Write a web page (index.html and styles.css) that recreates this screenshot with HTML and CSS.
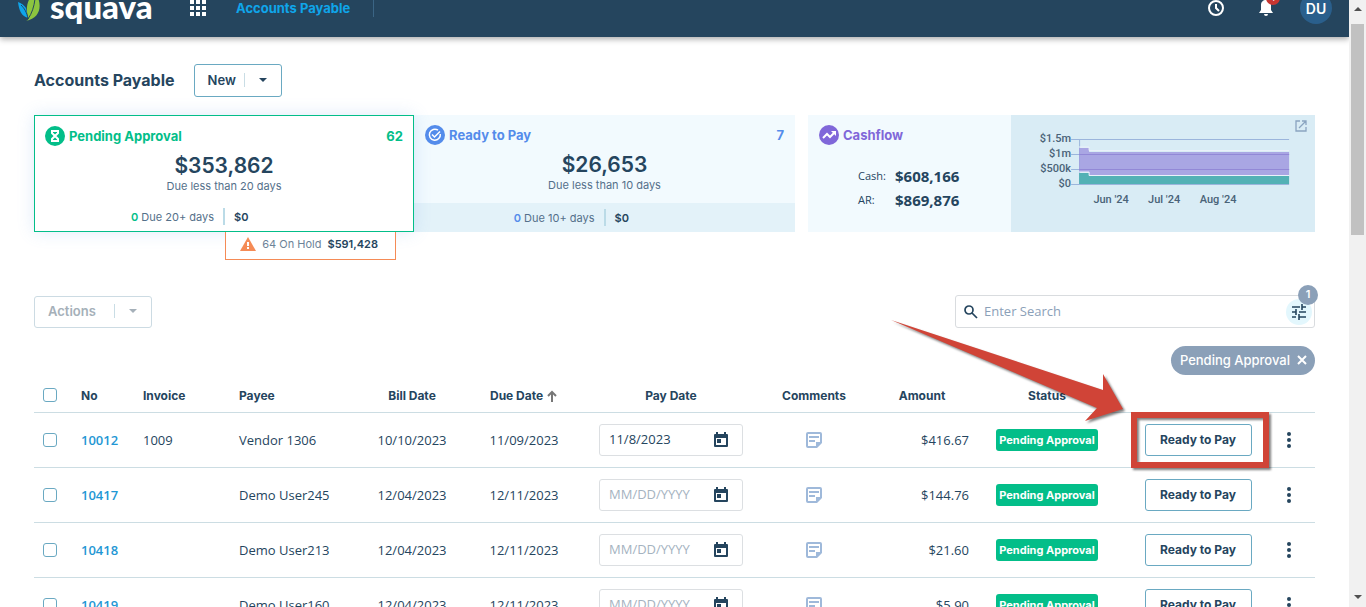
FILE: index.html
```html
<!DOCTYPE html>
<html lang="en">
<head>
    <meta charset="UTF-8">
    <meta name="viewport" content="width=device-width, initial-scale=1.0">
    <title>Accounts Payable</title>
    <link rel="stylesheet" href="styles.css">
</head>
<body>
    <!-- Icons -->
    <svg class="sprite" aria-hidden="true">
        <symbol id="calendar" viewBox="0 0 16 16"><path d="M3 0h2v2h6V0h2v2h1a1 1 0 0 1 1 1v11a1 1 0 0 1-1 1H2a1 1 0 0 1-1-1V3a1 1 0 0 1 1-1h1zM3 6v7h10V6zM4 7h4v4H4z"/></symbol>
        <symbol id="note" viewBox="0 0 18 18"><path fill-rule="evenodd" d="M3 1h12a2 2 0 0 1 2 2v9l-5 5H3a2 2 0 0 1-2-2V3a2 2 0 0 1 2-2zM3 3v12h8v-4h4V3zM4 5h10v2H4zM4 9h6v2H4z"/></symbol>
        <symbol id="dots" viewBox="0 0 24 24"><circle cx="12" cy="6" r="2"/><circle cx="12" cy="12" r="2"/><circle cx="12" cy="18" r="2"/></symbol>
        <symbol id="caret" viewBox="0 0 10 6"><path d="M1 1h8L5 5z"/></symbol>
    </svg>

    <div class="window">
        <div class="page">
            <header class="topbar">
                <a href="#" class="logo">
                    <svg width="24" height="34" viewBox="0 0 24 34" aria-hidden="true">
                        <path fill="#0fa5ea" d="M0 13c3 1 6 3 8 6l2 10C3 27 1 21 0 13z"/>
                        <path fill="#8cc53f" d="M17 3c8 12 6 26-9 29 2-1 3-2 2-4C7 18 10 9 17 3z"/>
                        <path fill="none" stroke="#25455e" d="M10 30c4-6 6-12 7-20M3 16c3 3 6 7 7 14"/>
                    </svg>
                    <span>squava</span>
                </a>
                <button class="icon-btn apps" aria-label="Apps">
                    <svg width="16" height="16" viewBox="0 0 16 16" fill="#fff"><path d="M0 0h4v4H0zM6 0h4v4H6zM12 0h4v4h-4zM0 6h4v4H0zM6 6h4v4H6zM12 6h4v4h-4zM0 12h4v4H0zM6 12h4v4H6zM12 12h4v4h-4z"/></svg>
                </button>
                <a href="#" class="nav-link">Accounts Payable</a>
                <div class="topbar-right">
                    <button class="icon-btn" aria-label="History">
                        <svg width="18" height="18" viewBox="0 0 18 18" fill="none" stroke="#fff" stroke-width="2"><circle cx="9" cy="9" r="7"/><path d="M9 5v4l3 3"/></svg>
                    </button>
                    <button class="icon-btn bell" aria-label="Notifications">
                        <svg width="14" height="18" viewBox="0 0 14 18" fill="#fff"><path d="M7 1c-3 0-5 2-5 5v5l-2 3h14l-2-3V6c0-3-2-5-5-5zM5 15h4a2 2 0 0 1-4 0z"/></svg>
                        <span class="bell-count">1</span>
                    </button>
                    <button class="avatar">DU</button>
                </div>
            </header>

            <main>
                <div class="title-row">
                    <h1>Accounts Payable</h1>
                    <button class="split-btn">New <span class="split-line"></span><svg width="10" height="6"><use href="#caret"/></svg></button>
                </div>

                <section class="cards">
                    <div class="pending-col">
                        <div class="card pending">
                            <div class="card-head">
                                <svg width="20" height="20" viewBox="0 0 20 20"><circle cx="10" cy="10" r="10" fill="#03be89"/><path fill="none" stroke="#fff" stroke-width="2" d="M6 5h8M6 15h8M7 5v2l3 3 3-3V5M7 15v-2l3-3 3 3v2"/></svg>
                                <h2>Pending Approval</h2>
                                <span class="count">62</span>
                            </div>
                            <div class="total">$353,862</div>
                            <div class="due">Due less than 20 days</div>
                            <div class="card-foot">
                                <span><b>0</b> Due 20+ days</span><i></i><strong>$0</strong>
                            </div>
                        </div>
                        <div class="hold">
                            <svg width="16" height="14" viewBox="0 0 16 14"><path fill="#f58b56" d="M8 0l8 14H0z"/><path fill="#fff" d="M7 5h2v4H7zM7 10h2v2H7z"/></svg>
                            <span>64 On Hold</span>
                            <strong>$591,428</strong>
                        </div>
                    </div>

                    <div class="card ready">
                        <div class="card-head">
                            <svg width="20" height="20" viewBox="0 0 20 20"><circle cx="10" cy="10" r="10" fill="#548ceb"/><path fill="none" stroke="#fff" stroke-width="1.5" d="M13 5.200A5.500 5.500 0 1 0 15.300 9M7 9.500l2.500 2.500L15 6.500"/></svg>
                            <h2>Ready to Pay</h2>
                            <span class="count">7</span>
                        </div>
                        <div class="total">$26,653</div>
                        <div class="due">Due less than 10 days</div>
                        <div class="card-foot">
                            <span><b>0</b> Due 10+ days</span><i></i><strong>$0</strong>
                        </div>
                    </div>

                    <div class="cashflow">
                        <div class="cash-info">
                            <div class="card-head">
                                <svg width="20" height="20" viewBox="0 0 20 20"><circle cx="10" cy="10" r="10" fill="#8067d9"/><path fill="none" stroke="#fff" stroke-width="2" d="M4 13l4-4 3 3 5-5"/><path fill="#fff" d="M12 6h5v5z"/></svg>
                                <h2>Cashflow</h2>
                            </div>
                            <dl>
                                <dt>Cash:</dt><dd>$608,166</dd>
                                <dt>AR:</dt><dd>$869,876</dd>
                            </dl>
                        </div>
                        <div class="cash-chart">
                            <svg class="chart" viewBox="0 0 304 117" role="img" aria-label="Cashflow forecast">
                                <path class="grid" d="M60 24.500H278M60 39.500H278M60 54.500H278M60 69.500H278M68.500 24V69"/>
                                <path fill="#a09adf" fill-opacity=".85" d="M68 33H78V37H278V60H78V57H68z"/>
                                <path fill="#53b1b5" d="M68 58H78V61H278V69H68z"/>
                                <path fill="none" stroke="#9288d6" d="M68 39.500H278M68 54.500H278"/>
                                <path fill="none" stroke="#eaf1fa" d="M68 32H78V35.500H278M68 57H78V60.500H278"/>
                                <g text-anchor="end">
                                    <text x="60" y="27">$1.5m</text>
                                    <text x="60" y="42">$1m</text>
                                    <text x="60" y="57">$500k</text>
                                    <text x="60" y="72">$0</text>
                                </g>
                                <g text-anchor="middle">
                                    <text x="100" y="88">Jun '24</text>
                                    <text x="153" y="88">Jul '24</text>
                                    <text x="207" y="88">Aug '24</text>
                                </g>
                            </svg>
                            <button class="open-btn" aria-label="Open cashflow">
                                <svg width="12" height="12" viewBox="0 0 12 12" fill="none" stroke="#8aa4c0" stroke-width="1.3"><path d="M5 1H1v10h10V7M7 1h4v4M11 1L4 8"/></svg>
                            </button>
                        </div>
                    </div>
                </section>

                <div class="toolbar">
                    <button class="split-btn actions" disabled>Actions <span class="split-line"></span><svg width="10" height="6"><use href="#caret"/></svg></button>
                    <div class="search">
                        <svg width="14" height="14" viewBox="0 0 14 14" fill="none" stroke="#25455e" stroke-width="1.700"><circle cx="5" cy="5" r="4"/><path d="M8 8l5 5"/></svg>
                        <input type="text" placeholder="Enter Search" aria-label="Search">
                        <button class="filter-btn" aria-label="Filters">
                            <svg width="16" height="16" viewBox="0 0 16 16" fill="none" stroke="#25455e" stroke-width="1.600"><path d="M1 3h8M11 3h4M11 0v6M1 8h4M8 8h7M5 5v6M1 13h4M8 13h7M8 10v6"/></svg>
                        </button>
                        <span class="filter-count">1</span>
                    </div>
                </div>

                <div class="chips">
                    <button class="chip">Pending Approval
                        <svg width="10" height="10" viewBox="0 0 10 10" fill="none" stroke="#fff" stroke-width="2"><path d="M1 1l8 8M9 1L1 9"/></svg>
                    </button>
                </div>

                <table>
                    <colgroup>
                        <col class="c-check"><col class="c-no"><col class="c-invoice"><col class="c-payee">
                        <col class="c-bill"><col class="c-due"><col class="c-pay"><col class="c-comments">
                        <col class="c-amount"><col class="c-status"><col class="c-action"><col class="c-menu">
                    </colgroup>
                    <thead>
                        <tr>
                            <th class="check"><input type="checkbox" aria-label="Select all"></th>
                            <th>No</th>
                            <th>Invoice</th>
                            <th>Payee</th>
                            <th class="center">Bill Date</th>
                            <th class="center">Due Date <svg class="sort" width="12" height="12" viewBox="0 0 12 12" fill="none" stroke="#777" stroke-width="2"><path d="M6 12V2M2 6l4-4 4 4"/></svg></th>
                            <th class="center">Pay Date</th>
                            <th class="center">Comments</th>
                            <th class="center">Amount</th>
                            <th class="center">Status</th>
                            <th></th>
                            <th></th>
                        </tr>
                    </thead>
                    <tbody>
                        <tr>
                            <td class="check"><input type="checkbox" aria-label="Select 10012"></td>
                            <td><a href="#">10012</a></td>
                            <td>1009</td>
                            <td>Vendor 1306</td>
                            <td class="center">10/10/2023</td>
                            <td class="center">11/09/2023</td>
                            <td><div class="date-field"><input type="text" value="11/8/2023" placeholder="MM/DD/YYYY" aria-label="Pay date 10012"><svg width="16" height="16"><use href="#calendar"/></svg></div></td>
                            <td class="center"><button class="icon-btn note" aria-label="Comments"><svg width="18" height="18"><use href="#note"/></svg></button></td>
                            <td class="amount">$416.67</td>
                            <td class="center"><span class="badge">Pending Approval</span></td>
                            <td class="center">
                                <div class="callout">
                                    <button class="pay-btn">Ready to Pay</button>
                                    <span class="callout-box"></span>
                                    <svg class="callout-arrow" width="236" height="108" viewBox="0 0 236 108"><path fill="#d04437" d="M0 0L212 70V54L232 89L194 101L206 88z"/></svg>
                                </div>
                            </td>
                            <td class="menu"><button class="icon-btn" aria-label="More"><svg width="24" height="24"><use href="#dots"/></svg></button></td>
                        </tr>
                        <tr>
                            <td class="check"><input type="checkbox" aria-label="Select 10417"></td>
                            <td><a href="#">10417</a></td>
                            <td></td>
                            <td>Demo User245</td>
                            <td class="center">12/04/2023</td>
                            <td class="center">12/11/2023</td>
                            <td><div class="date-field"><input type="text" placeholder="MM/DD/YYYY" aria-label="Pay date 10417"><svg width="16" height="16"><use href="#calendar"/></svg></div></td>
                            <td class="center"><button class="icon-btn note" aria-label="Comments"><svg width="18" height="18"><use href="#note"/></svg></button></td>
                            <td class="amount">$144.76</td>
                            <td class="center"><span class="badge">Pending Approval</span></td>
                            <td class="center"><button class="pay-btn">Ready to Pay</button></td>
                            <td class="menu"><button class="icon-btn" aria-label="More"><svg width="24" height="24"><use href="#dots"/></svg></button></td>
                        </tr>
                        <tr>
                            <td class="check"><input type="checkbox" aria-label="Select 10418"></td>
                            <td><a href="#">10418</a></td>
                            <td></td>
                            <td>Demo User213</td>
                            <td class="center">12/04/2023</td>
                            <td class="center">12/11/2023</td>
                            <td><div class="date-field"><input type="text" placeholder="MM/DD/YYYY" aria-label="Pay date 10418"><svg width="16" height="16"><use href="#calendar"/></svg></div></td>
                            <td class="center"><button class="icon-btn note" aria-label="Comments"><svg width="18" height="18"><use href="#note"/></svg></button></td>
                            <td class="amount">$21.60</td>
                            <td class="center"><span class="badge">Pending Approval</span></td>
                            <td class="center"><button class="pay-btn">Ready to Pay</button></td>
                            <td class="menu"><button class="icon-btn" aria-label="More"><svg width="24" height="24"><use href="#dots"/></svg></button></td>
                        </tr>
                        <tr>
                            <td class="check"><input type="checkbox" aria-label="Select 10419"></td>
                            <td><a href="#">10419</a></td>
                            <td></td>
                            <td>Demo User160</td>
                            <td class="center">12/04/2023</td>
                            <td class="center">12/11/2023</td>
                            <td><div class="date-field"><input type="text" placeholder="MM/DD/YYYY" aria-label="Pay date 10419"><svg width="16" height="16"><use href="#calendar"/></svg></div></td>
                            <td class="center"><button class="icon-btn note" aria-label="Comments"><svg width="18" height="18"><use href="#note"/></svg></button></td>
                            <td class="amount">$5.90</td>
                            <td class="center"><span class="badge">Pending Approval</span></td>
                            <td class="center"><button class="pay-btn">Ready to Pay</button></td>
                            <td class="menu"><button class="icon-btn" aria-label="More"><svg width="24" height="24"><use href="#dots"/></svg></button></td>
                        </tr>
                    </tbody>
                </table>
            </main>
        </div>

        <div class="scrollbar" aria-hidden="true">
            <svg width="8" height="5" viewBox="0 0 8 5"><path fill="#505050" d="M4 0l4 4H0z"/></svg>
            <div class="thumb"></div>
            <svg width="8" height="5" viewBox="0 0 8 5"><path fill="#505050" d="M0 0h8L4 4z"/></svg>
        </div>
    </div>
</body>
</html>
```
FILE: styles.css
```css
* {
    box-sizing: border-box;
}

body {
    margin: 0;
    font-family: 'Open Sans', 'Noto Sans', sans-serif;
    font-size: 13px;
    color: #25455e;
    background-color: #fff;
}

button {
    font-family: Inter, sans-serif;
    color: #25455e;
    cursor: pointer;
}

svg {
    display: block;
    flex: none;
}

.sprite {
    position: absolute;
    width: 0;
    height: 0;
}

.window {
    display: flex;
    height: 100vh;
    overflow: hidden;
}

.page {
    flex: 1;
    min-width: 0;
    height: 100%;
    overflow: hidden;
}

/* Top bar */
.topbar {
    display: flex;
    align-items: center;
    height: 37px;
    padding: 0 17px 21px 18px;
    background-color: #25455e;
    box-shadow: 0 2px 6px rgba(0, 0, 0, 0.35);
}

.logo {
    display: flex;
    align-items: center;
    gap: 8px;
    width: 172px;
    padding-bottom: 5px;
    font-family: Lato, sans-serif;
    font-size: 33px;
    font-weight: 900;
    line-height: 40px;
    color: #fff;
    text-decoration: none;
}

.icon-btn {
    display: inline-flex;
    padding: 0;
    border: none;
    background: none;
}

.nav-link {
    margin-left: 30px;
    padding-right: 23px;
    border-right: 1px solid #3b6585;
    font-family: Inter, sans-serif;
    font-size: 13px;
    font-weight: 700;
    line-height: 18px;
    color: #0fa5ea;
    text-decoration: none;
}

.topbar-right {
    display: flex;
    align-items: center;
    gap: 27px;
    margin-left: auto;
}

.bell {
    position: relative;
    margin: 0 0 0 7px;
}

.bell-count {
    position: absolute;
    left: 7px;
    top: -8px;
    width: 14px;
    height: 14px;
    border-radius: 50%;
    background-color: #c63531;
    font-size: 9px;
    line-height: 14px;
    text-align: center;
    color: #fff;
}

.avatar {
    width: 32px;
    height: 32px;
    padding: 0;
    border: none;
    border-radius: 50%;
    background-color: #2a5f8c;
    font-size: 14px;
    font-weight: 600;
    color: #fff;
}

/* Content */
main {
    padding: 27px 34px 0;
}

h1,
h2 {
    margin: 0;
    font-family: Inter, sans-serif;
    font-weight: 700;
}

h1 {
    padding-bottom: 2px;
    font-size: 16px;
}

h2 {
    font-size: 13px;
}

.title-row {
    display: flex;
    align-items: center;
    gap: 19px;
    margin-bottom: 18px;
}

.split-btn {
    display: flex;
    align-items: center;
    height: 33px;
    padding: 0 13px 2px;
    border: 1px solid #6aa9c2;
    border-radius: 3px;
    background-color: #fff;
    font-size: 13px;
    font-weight: 600;
}

.split-btn svg {
    fill: currentColor;
}

.split-line {
    width: 1px;
    height: 14px;
    margin: 0 13px 0 8px;
    background-color: #c9dde5;
}

.actions {
    height: 32px;
    border-color: #ccdbe3;
    color: #a5b0b9;
    cursor: default;
}

.actions .split-line {
    margin-left: 18px;
}

/* Cards */
.cards {
    display: grid;
    grid-template-columns: 380fr 381fr 520fr;
    align-items: start;
}

.card {
    height: 117px;
    padding: 10px 11px 0;
    display: flex;
    flex-direction: column;
    align-items: center;
    font-family: Inter, sans-serif;
}

.card-head {
    display: flex;
    align-items: center;
    gap: 4px;
    width: 100%;
    height: 20px;
}

.count {
    margin-left: auto;
    font-size: 13px;
    font-weight: 700;
}

.total {
    margin-top: 7px;
    font-size: 21px;
    font-weight: 600;
    line-height: 26px;
}

.due {
    font-size: 11px;
    line-height: 14px;
    color: #54708a;
}

.card-foot {
    display: grid;
    grid-template-columns: 1fr 2px 1fr;
    gap: 9px;
    align-items: center;
    align-self: stretch;
    height: 29px;
    margin: auto -11px 0;
    font-size: 11px;
    color: #54708a;
}

.card-foot span {
    text-align: right;
}

.card-foot b {
    font-weight: 600;
}

.card-foot i {
    height: 17px;
    background-color: #bbdbe7;
}

.card-foot strong,
.hold strong {
    font-weight: 600;
    color: #25455e;
}

.pending {
    padding: 10px 10px 0;
    border: 1px solid #03be89;
    background-color: #fff;
    box-shadow: 0 0 16px rgba(90, 150, 230, 0.2);
}

.pending .card-foot {
    margin: auto -10px 0;
}

.pending h2,
.pending .count,
.pending b {
    color: #03be89;
}

.ready {
    background-color: #f2fafe;
}

.ready .card-foot {
    background-color: #e3f2f9;
}

.ready h2,
.ready .count,
.ready b {
    color: #548ceb;
}

.pending-col {
    position: relative;
    display: flex;
    flex-direction: column;
}

.hold {
    display: flex;
    align-items: center;
    align-self: flex-end;
    gap: 6px;
    height: 28px;
    margin-right: 18px;
    padding: 0 17px 3px 14px;
    border: 1px solid #f58b56;
    border-top: none;
    background-color: #fff;
    font-family: Inter, sans-serif;
    font-size: 11px;
    color: #6d8398;
}

.cashflow {
    display: grid;
    grid-template-columns: 2fr 3fr;
    height: 117px;
    margin-left: 13px;
}

.cash-info {
    padding: 10px 11px 0;
    background-color: #f2fafe;
}

.cashflow h2 {
    color: #8067d9;
}

dl {
    display: grid;
    grid-template-columns: 37px 1fr;
    margin: 19px 0 0 39px;
    line-height: 24px;
}

dt {
    font-size: 11px;
}

dd {
    margin: 0;
    font-size: 15px;
    font-weight: 700;
}

.cash-chart {
    position: relative;
    background-color: #d9ecf5;
}

.chart {
    width: 100%;
    height: 117px;
}

.chart text {
    font-family: Roboto, sans-serif;
    font-size: 11px;
    font-weight: 500;
    fill: #4a6378;
}

.grid {
    fill: none;
    stroke: #9bb5dc;
}

.open-btn {
    position: absolute;
    top: 5px;
    right: 8px;
    padding: 0;
    border: none;
    background: none;
}

/* Search and filters */
.toolbar {
    display: flex;
    align-items: center;
    justify-content: space-between;
    margin-top: 35px;
}

.search {
    position: relative;
    display: flex;
    align-items: center;
    width: 360px;
    height: 33px;
    padding: 0 2px 0 8px;
    border: 1px solid #d9dcdf;
    border-radius: 3px;
}

.search input {
    flex: 1;
    min-width: 0;
    padding: 0 6px 2px;
    border: none;
    outline: none;
    font-family: inherit;
    font-size: 13px;
    color: #25455e;
}

.search input::placeholder {
    color: #8ba0b8;
}

.filter-btn {
    display: flex;
    align-items: center;
    justify-content: center;
    width: 26px;
    height: 26px;
    padding: 0;
    border: none;
    border-radius: 50%;
    background-color: #e3f7fd;
}

.filter-count {
    position: absolute;
    top: -11px;
    right: -4px;
    width: 20px;
    height: 20px;
    border-radius: 50%;
    background-color: #8ba0b8;
    font-family: Inter, sans-serif;
    font-size: 11px;
    font-weight: 600;
    line-height: 18px;
    text-align: center;
    color: #fff;
}

.chips {
    display: flex;
    justify-content: flex-end;
    margin-top: 18px;
}

.chip {
    display: flex;
    align-items: center;
    gap: 7px;
    height: 29px;
    padding: 0 8px 2px 9px;
    border: none;
    border-radius: 15px;
    background-color: #8ba0b8;
    font-size: 13px;
    font-weight: 500;
    color: #fff;
}

/* Table */
table {
    width: 100%;
    table-layout: fixed;
    border-collapse: collapse;
}

.c-check { width: 41px; }
.c-no { width: 62px; }
.c-invoice { width: 96px; }
.c-payee { width: 126px; }
.c-bill { width: 106px; }
.c-due { width: 118px; }
.c-pay { width: 176px; }
.c-comments { width: 110px; }
.c-amount { width: 106px; }
.c-status { width: 144px; }
.c-action { width: 158px; }
.c-menu { width: 38px; }

th,
td {
    padding: 0 6px;
    border-bottom: 1px solid #ccdde3;
    text-align: left;
    white-space: nowrap;
}

th {
    height: 37px;
    padding-top: 4px;
    font-family: Inter, sans-serif;
    font-size: 12px;
    font-weight: 700;
}

td {
    height: 55px;
}

td a {
    font-weight: 600;
    color: #1f97d4;
    text-decoration: none;
}

.center {
    text-align: center;
}

.check {
    padding-left: 9px;
}

.check input {
    display: block;
    appearance: none;
    width: 14px;
    height: 14px;
    margin: 0;
    border: 1px solid #6aa9c2;
    border-radius: 3px;
}

.sort {
    display: inline-block;
    vertical-align: -2px;
}

.amount {
    text-align: right;
}

.date-field {
    display: flex;
    align-items: center;
    width: 144px;
    height: 32px;
    margin: 0 auto;
    padding: 0 13px 0 9px;
    border: 1px solid #dcdfe2;
    border-radius: 3px;
    fill: #25455e;
}

.date-field input {
    flex: 1;
    min-width: 0;
    padding: 0 0 2px;
    border: none;
    outline: none;
    font-family: inherit;
    font-size: 13px;
    color: #25455e;
}

.date-field input::placeholder {
    color: #a5b3bf;
}

.icon-btn {
    vertical-align: middle;
    fill: #25455e;
}

.note {
    fill: #9fb9da;
}

.badge {
    display: inline-block;
    padding: 0 3px;
    border-radius: 3px;
    background-color: #03be89;
    font-family: Inter, sans-serif;
    font-size: 11px;
    font-weight: 700;
    line-height: 22px;
    color: #fff;
}

.pay-btn {
    width: 107px;
    height: 32px;
    padding: 0;
    border: 1px solid #6aa9c2;
    border-radius: 3px;
    background-color: #fff;
    font-size: 12px;
    font-weight: 700;
}

.menu {
    padding: 0;
}

/* Callout over the first Ready to Pay button */
.callout {
    position: relative;
    display: inline-block;
}

.callout-box {
    position: absolute;
    top: -12px;
    right: -17px;
    bottom: -12px;
    left: -14px;
    border: 6px solid #d04437;
    filter: drop-shadow(2px 2px 1px rgba(0, 0, 0, 0.5));
    pointer-events: none;
}

.callout-arrow {
    position: absolute;
    top: -104px;
    left: -254px;
    filter: drop-shadow(2px 2px 1px rgba(0, 0, 0, 0.5));
    pointer-events: none;
}

/* Scrollbar */
.scrollbar {
    display: flex;
    flex-direction: column;
    align-items: center;
    width: 17px;
    padding: 7px 0;
    background-color: #f1f1f1;
}

.thumb {
    width: 13px;
    height: 211px;
    margin: 12px 0 auto;
    background-color: #c1c1c1;
}
```
